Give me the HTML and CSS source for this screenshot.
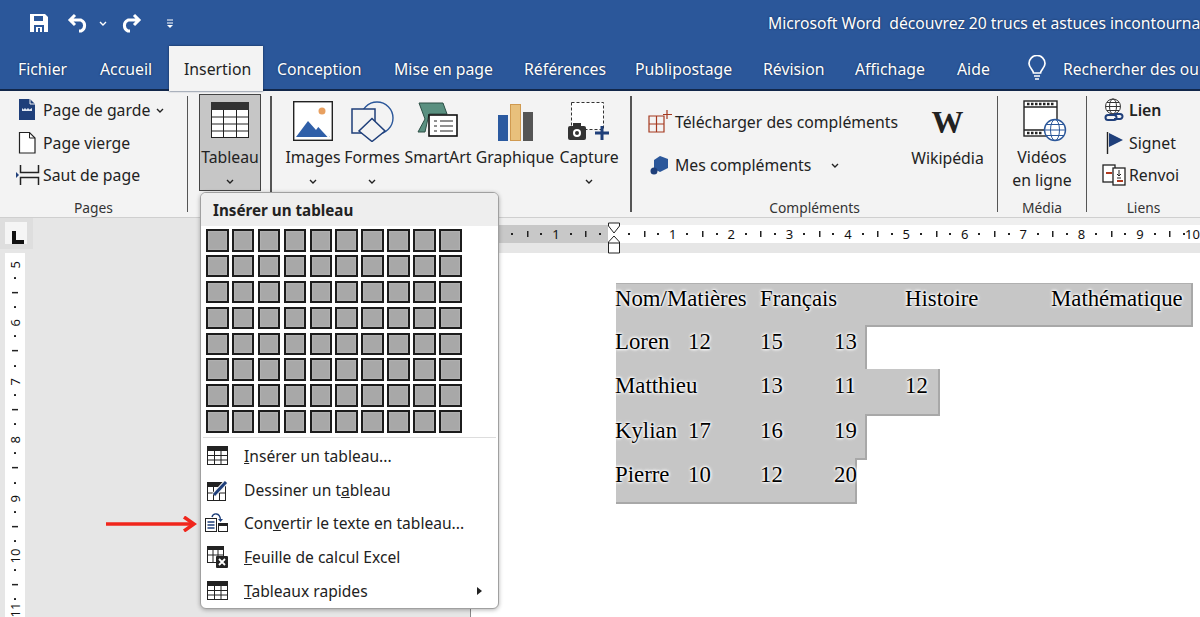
FILE: index.html
```html
<!DOCTYPE html>
<html lang="fr">
<head>
    <meta charset="UTF-8">
    <meta name="viewport" content="width=device-width, initial-scale=1.0">
    <title>Microsoft Word</title>
    <link rel="stylesheet" href="styles.css">
</head>
<body>
    <header class="titlebar">
        <div class="quick-access">
            <svg class="qa-save" width="20" height="20" viewBox="0 0 20 20"><path d="M1 1h15l3 3v15H1z" fill="#fff"/><rect x="5" y="3" width="9" height="5" fill="#2b579a"/><rect x="5" y="12" width="10" height="7" fill="#2b579a"/><rect x="7" y="14" width="6" height="5" fill="#fff"/><rect x="9" y="15" width="2" height="4" fill="#2b579a"/></svg>
            <svg class="qa-undo" width="24" height="20" viewBox="0 0 24 20"><path d="M8 2L3 7l5 5M3 7h11a6 6 0 0 1 0 11h-2" fill="none" stroke="#fff" stroke-width="3"/></svg>
            <svg class="qa-drop" width="8" height="5" viewBox="0 0 8 5"><path d="M1 1l3 3 3-3" fill="none" stroke="#fff" stroke-width="1.4"/></svg>
            <svg class="qa-redo" width="24" height="20" viewBox="0 0 24 20"><path d="M16 2l5 5-5 5M21 7H10a6 6 0 0 0 0 11h2" fill="none" stroke="#fff" stroke-width="3"/></svg>
            <svg class="qa-more" width="8" height="10" viewBox="0 0 8 10"><path d="M1 2h6M1 5h6" stroke="#fff" stroke-width="1.2"/><path d="M1 7h6L4 10z" fill="#fff"/></svg>
        </div>
        <div class="doc-title">Microsoft Word  découvrez 20 trucs et astuces incontourna</div>
    </header>

    <nav class="tabs">
        <span class="tab">Fichier</span>
        <span class="tab">Accueil</span>
        <span class="tab active">Insertion</span>
        <span class="tab">Conception</span>
        <span class="tab">Mise en page</span>
        <span class="tab">Références</span>
        <span class="tab">Publipostage</span>
        <span class="tab">Révision</span>
        <span class="tab">Affichage</span>
        <span class="tab">Aide</span>
        <svg class="bulb" width="20" height="26" viewBox="0 0 20 26"><path d="M6.500 18c0-3-4.500-5-4.500-9.500a8 8 0 0 1 16 0c0 4.500-4.500 6.500-4.500 9.500z" fill="none" stroke="#fff" stroke-width="1.700"/><path d="M7 21h6M8 24h4" stroke="#fff" stroke-width="1.700"/></svg>
        <span class="tab search">Rechercher des ou</span>
    </nav>

    <section class="ribbon">
        <div class="group group-pages">
            <div class="stack">
                <div class="row">
                    <svg class="row-icon" width="26" height="24" viewBox="0 0 26 24"><path d="M3 1h11l5 5v16H3z" fill="#1f3f7a"/><path d="M14 1v5h5" fill="none" stroke="#f3f3f3"/><path d="M6 10l1.500 1.500L9 10l1.500 1.500L12 10l1.500 1.500L16 10v3H6z" fill="#dfe6f2"/></svg>
                    <span>Page de garde</span>
                    <svg class="chev row-chev" width="8" height="5" viewBox="0 0 8 5"><path d="M1 1l3 3 3-3"/></svg>
                </div>
                <div class="row">
                    <svg class="row-icon" width="26" height="24" viewBox="0 0 26 24"><path d="M3.500 1.500h10l5.500 5.500v15H3.500z" fill="#fff" stroke="#222" stroke-width="1.200"/><path d="M13.500 1.500V7H19" fill="none" stroke="#222"/></svg>
                    <span>Page vierge</span>
                </div>
                <div class="row">
                    <svg class="row-icon" width="26" height="24" viewBox="0 0 26 24"><path d="M4.500 2v7.500h18V2M4.500 22v-7.500h18V22" fill="none" stroke="#222" stroke-width="1.500"/><path d="M0 9l3 3-3 3z" fill="#1f3f7a"/></svg>
                    <span>Saut de page</span>
                </div>
            </div>
            <div class="group-label">Pages</div>
        </div>

        <div class="group group-table">
            <div class="tool table-tool">
                <svg width="38" height="36" viewBox="0 0 38 36"><rect x="0.500" y="0.500" width="37" height="35" fill="#fff" stroke="#222"/><rect x="0" y="0" width="38" height="8" fill="#333"/><path d="M0 15h38M0 22h38M0 29h38M12.500 8v28M25.500 8v28" stroke="#222"/></svg>
                <span>Tableau</span>
                <svg class="chev" width="8" height="5" viewBox="0 0 8 5"><path d="M1 1l3 3 3-3"/></svg>
            </div>
        </div>

        <div class="group group-illus">
            <div class="tool">
                <svg width="40" height="40" viewBox="0 0 40 40"><rect x="0.700" y="0.700" width="38.600" height="38.600" fill="#fff" stroke="#222" stroke-width="1.400"/><circle cx="29" cy="10" r="3.500" fill="#e8a060"/><path d="M3 36L15 20l8 9 3-4 11 11z" fill="#2f5fa8"/><path d="M24 23l12 13" stroke="#fff" stroke-width="2"/></svg>
                <span>Images</span>
                <svg class="chev" width="8" height="5" viewBox="0 0 8 5"><path d="M1 1l3 3 3-3"/></svg>
            </div>
            <div class="tool">
                <svg width="46" height="42" viewBox="0 0 46 42"><circle cx="28" cy="18" r="16" fill="none" stroke="#2b579a" stroke-width="1.400"/><rect x="3" y="9" width="23" height="24" fill="#f3f3f3" stroke="#1f3f7a" stroke-width="1.500"/><path d="M23 18.500l13 12.500-13 10.500-13-10.500z" fill="#f3f3f3" stroke="#1f3f7a" stroke-width="1.500"/></svg>
                <span>Formes</span>
                <svg class="chev" width="8" height="5" viewBox="0 0 8 5"><path d="M1 1l3 3 3-3"/></svg>
            </div>
            <div class="tool">
                <svg width="44" height="38" viewBox="0 0 44 38"><path d="M3 1h24l4 11H13L9 30H2l7-13z" fill="#5a9080" stroke="#2c4f45"/><rect x="13" y="13" width="28" height="21" fill="#fff" stroke="#111" stroke-width="1.600"/><path d="M18 19h3M24 19h13M18 24h3M24 24h13M18 29h3M24 29h13" stroke="#222" stroke-width="1.200"/></svg>
                <span>SmartArt</span>
            </div>
            <div class="tool">
                <svg width="38" height="40" viewBox="0 0 38 40"><rect x="2" y="14" width="10" height="26" fill="#2b5aa0"/><rect x="14.500" y="3.500" width="10" height="36" fill="#e8c07c" stroke="#d09a50"/><rect x="27" y="11" width="10" height="29" fill="#555"/></svg>
                <span>Graphique</span>
            </div>
            <div class="tool">
                <svg width="42" height="40" viewBox="0 0 42 40"><rect x="3.500" y="1.500" width="32" height="27" fill="#fff" stroke="#333" stroke-dasharray="3 2"/><rect x="0" y="25" width="18" height="14" rx="2" fill="#333"/><rect x="5" y="22" width="8" height="4" fill="#333"/><circle cx="9" cy="32" r="4" fill="#fff"/><circle cx="9" cy="32" r="2" fill="#333"/><path d="M27 32h14M34 25v14" stroke="#1f3f7a" stroke-width="3"/></svg>
                <span>Capture</span>
                <svg class="chev" width="8" height="5" viewBox="0 0 8 5"><path d="M1 1l3 3 3-3"/></svg>
            </div>
        </div>

        <div class="group group-addins">
            <div class="addins-body">
                <div class="addins-list">
                    <div class="row">
                        <svg class="row-icon" width="24" height="24" viewBox="0 0 24 24"><path d="M1 6h15v16H1zM1 14h15M8.500 6v16" fill="none" stroke="#a5391f" stroke-width="1.200"/><path d="M19 0v9M15 4.500h9" stroke="#a5391f" stroke-width="1.200"/></svg>
                        <span>Télécharger des compléments</span>
                    </div>
                    <div class="row">
                        <svg class="row-icon" width="24" height="24" viewBox="0 0 24 24"><path d="M12 3l8 3v9l-8 4-6-3V7z" fill="#2b579a"/><circle cx="6" cy="18" r="3.500" fill="#1f3f7a"/></svg>
                        <span>Mes compléments</span>
                        <svg class="chev addin-chev" width="8" height="5" viewBox="0 0 8 5"><path d="M1 1l3 3 3-3"/></svg>
                    </div>
                </div>
                <div class="tool wiki-tool">
                    <span class="wiki-logo">W</span>
                    <span>Wikipédia</span>
                </div>
            </div>
            <div class="group-label">Compléments</div>
        </div>

        <div class="group group-media">
            <div class="tool media-tool">
                <svg width="44" height="42" viewBox="0 0 44 42"><rect x="1" y="1" width="33" height="35" fill="#fff" stroke="#222" stroke-width="1.400"/><path d="M1 7h33M1 30h33" stroke="#222" stroke-width="1.400"/><path d="M4 4h27M4 33h16" stroke="#222" stroke-width="2.400" stroke-dasharray="2.500 1.500"/><circle cx="32" cy="30" r="10.500" fill="#fff" stroke="#2b579a" stroke-width="1.400"/><ellipse cx="32" cy="30" rx="4.500" ry="10.500" fill="none" stroke="#2b579a"/><path d="M21.500 30h21M23 24.500h18M23 35.500h18" stroke="#2b579a"/></svg>
                <span>Vidéos<br>en ligne</span>
            </div>
            <div class="group-label">Média</div>
        </div>

        <div class="group group-links">
            <div class="stack">
                <div class="row">
                    <svg class="row-icon" width="24" height="24" viewBox="0 0 24 24"><circle cx="11" cy="8.500" r="7.500" fill="#fff" stroke="#333"/><ellipse cx="11" cy="8.500" rx="3.500" ry="7.500" fill="none" stroke="#333"/><path d="M3.500 8.500h15M5 4.500h12M5 12.500h12" stroke="#333"/><path d="M6 17h6a2.500 2.500 0 0 1 0 5H6a2.500 2.500 0 0 1 0-5zM12 16h6a2.500 2.500 0 0 1 0 5h-6" fill="none" stroke="#1f3f7a" stroke-width="2"/></svg>
                    <span class="link-strong">Lien</span>
                </div>
                <div class="row">
                    <svg class="row-icon" width="24" height="24" viewBox="0 0 24 24"><path d="M5.500 1v22" stroke="#222" stroke-width="1.400"/><path d="M7 2l14 7-14 7z" fill="#1f3f7a"/></svg>
                    <span>Signet</span>
                </div>
                <div class="row">
                    <svg class="row-icon" width="24" height="24" viewBox="0 0 24 24"><rect x="1" y="2" width="12" height="17" fill="#fff" stroke="#222" stroke-width="1.300"/><rect x="11" y="5" width="12" height="17" fill="#fff" stroke="#222" stroke-width="1.300"/><path d="M4 10h6M15 18h6" stroke="#b03a1f" stroke-width="2"/><path d="M17 7v6M15 11l2 2 2-2M15 15h4" fill="none" stroke="#222"/></svg>
                    <span>Renvoi</span>
                </div>
            </div>
            <div class="group-label">Liens</div>
        </div>
    </section>

    <div class="ruler-band">
        <div class="ruler-corner">
            <div class="tab-corner"><span class="tab-stop"></span></div>
        </div>
        <div class="ruler-top">
            <span class="unit"></span><span class="unit">1</span><span class="unit"></span>
            <span class="unit">1</span><span class="unit">2</span><span class="unit">3</span><span class="unit">4</span><span class="unit">5</span><span class="unit">6</span><span class="unit">7</span><span class="unit">8</span><span class="unit">9</span><span class="unit unit-last">10</span>
        </div>
        <svg class="indent" width="14" height="32" viewBox="0 0 14 32"><path d="M1.500 1h11v3L7 11 1.500 4z" fill="#fff" stroke="#222"/><path d="M7 14l5.500 6v11h-11V20z" fill="#fff" stroke="#222"/><path d="M1.500 21h11" stroke="#222"/></svg>
    </div>

    <main class="workspace">
        <div class="ruler-side">
            <div class="ruler-side-inner">
                <span class="vunit">5</span><span class="vunit">6</span><span class="vunit">7</span><span class="vunit">8</span><span class="vunit">9</span><span class="vunit">10</span><span class="vunit vunit-last">11</span>
            </div>
        </div>
        <div class="page">
            <div class="sel-row row-head">
                <span class="span2">Nom/Matières</span><span class="span2">Français</span><span>Histoire</span><span>Mathématique</span>
            </div>
            <div class="sel-row row-short">
                <span>Loren</span><span>12</span><span>15</span><span>13</span>
            </div>
            <div class="sel-row row-long">
                <span>Matthieu</span><span></span><span>13</span><span>11</span><span>12</span>
            </div>
            <div class="sel-row row-short">
                <span>Kylian</span><span>17</span><span>16</span><span>19</span>
            </div>
            <div class="sel-row row-last">
                <span>Pierre</span><span>10</span><span>12</span><span>20</span>
            </div>
        </div>
    </main>

    <div class="table-menu">
        <div class="menu-head">Insérer un tableau</div>
        <div class="cell-grid" id="cells"></div>
        <ul class="menu-list">
            <li>
                <svg width="24" height="22" viewBox="0 0 24 22"><rect x="2.500" y="1.500" width="20" height="18" fill="#fff" stroke="#222"/><rect x="2" y="1" width="21" height="5" fill="#222"/><path d="M2 10.500h21M2 15h21M9.500 6v14M16 6v14" stroke="#222"/></svg>
                <span><u>I</u>nsérer un tableau...</span>
            </li>
            <li>
                <svg width="24" height="22" viewBox="0 0 24 22"><rect x="2.500" y="3.500" width="18" height="18" fill="#fff" stroke="#222"/><rect x="2" y="3" width="19" height="5" fill="#222"/><path d="M2 14h19M8.500 8v14M14.500 8v14" stroke="#222"/><path d="M9 16L21 3" stroke="#f3f3f3" stroke-width="5"/><path d="M9 16L21 3" stroke="#1f3f7a" stroke-width="3"/></svg>
                <span>Dessiner un t<u>a</u>bleau</span>
            </li>
            <li>
                <svg width="24" height="22" viewBox="0 0 24 22"><rect x="0.500" y="6.500" width="11" height="13" fill="#fff" stroke="#222"/><path d="M2.500 10h7M2.500 13h7M2.500 16h7" stroke="#1f3f7a" stroke-width="1.400"/><rect x="13.500" y="11.500" width="9" height="8" fill="#fff" stroke="#222"/><rect x="13" y="11" width="10" height="3" fill="#222"/><path d="M7 5c1-4 8-5 8.500 3" fill="none" stroke="#1f3f7a" stroke-width="1.300"/><path d="M13 7h5l-2.500 3z" fill="#1f3f7a"/></svg>
                <span>Con<u>v</u>ertir le texte en tableau...</span>
            </li>
            <li>
                <svg width="24" height="22" viewBox="0 0 24 22"><rect x="2.500" y="0.500" width="16" height="16" fill="#fff" stroke="#222"/><rect x="2" width="17" height="4" fill="#222"/><path d="M2 9h17M8 4v13M13 4v13" stroke="#222"/><rect x="11" y="10" width="12" height="12" rx="1" fill="#222"/><path d="M14 13l6 6M20 13l-6 6" stroke="#fff" stroke-width="1.800"/></svg>
                <span><u>F</u>euille de calcul Excel</span>
            </li>
            <li>
                <svg width="24" height="22" viewBox="0 0 24 22"><rect x="2.500" y="1.500" width="20" height="18" fill="#fff" stroke="#222"/><rect x="2" y="1" width="21" height="5" fill="#222"/><path d="M2 10.500h21M2 15h21M9.500 6v14M16 6v14" stroke="#222"/></svg>
                <span><u>T</u>ableaux rapides</span>
                <i class="submenu"></i>
            </li>
        </ul>
    </div>

    <svg class="red-arrow" width="92" height="16" viewBox="0 0 92 16"><path d="M1 8h86" stroke="#f0261c" stroke-width="3.500"/><path d="M79 1l10 7-10 7" fill="none" stroke="#f0261c" stroke-width="3.500"/></svg>

    <script>
        // 8 rows of 10 cells for the table picker
        const cells = document.getElementById('cells');
        for (let i = 0; i < 80; i++) {
            cells.appendChild(document.createElement('span'));
        }
    </script>
</body>
</html>
```

FILE: styles.css
```css
* {
    box-sizing: border-box;
}

body {
    margin: 0;
    width: 1200px;
    height: 617px;
    overflow: hidden;
    position: relative;
    background-color: #e6e6e6;
    color: #222;
    font-family: "Noto Sans", "Open Sans", sans-serif;
    font-size: 15.8px;
}

svg {
    display: block;
    flex: none;
}

/* title bar */
.titlebar {
    display: flex;
    align-items: center;
    height: 46px;
    background-color: #2b579a;
    color: #fff;
    overflow: hidden;
}

.quick-access {
    display: flex;
    align-items: center;
    width: 768px;
    flex: none;
    padding-left: 29px;
}

.qa-undo { margin-left: 18px; }
.qa-drop { margin-left: 8px; }
.qa-redo { margin-left: 11px; }
.qa-more { margin-left: 24px; }

.doc-title {
    white-space: pre;
    font-size: 15.700px;
    text-shadow: 0 0 2px #12274a;
}

/* tabs */
.tabs {
    display: grid;
    grid-template-columns: 82px 69px 108px 117px 130px 111px 128px 92px 102px 70px 36px 137px;
    align-items: center;
    height: 45px;
    padding-left: 18px;
    background-color: #2b579a;
    border-bottom: 2px solid #12274a;
    color: #fff;
    white-space: nowrap;
    text-shadow: 0 0 2px #12274a;
}

.tab.active {
    justify-self: start;
    width: 94px;
    height: 45px;
    line-height: 46px;
    padding-left: 15px;
    background-color: #f3f3f3;
    color: #222;
    box-shadow: 0 0 2px #12274a;
    text-shadow: none;
}

.tab.search {
    font-size: 15.600px;
}

.bulb {
    margin-top: -2px;
}

/* ribbon */
.ribbon {
    display: flex;
    height: 127px;
    padding-top: 5px;
    background-color: #f3f3f3;
    border-bottom: 1px solid #cfcfcf;
    white-space: nowrap;
}

.group {
    position: relative;
    height: 116px;
    border-right: 1px solid #555;
    flex: none;
}

.group-label {
    position: absolute;
    left: 0;
    right: 0;
    bottom: -5px;
    text-align: center;
    font-size: 13.800px;
    color: #333;
}

.group-pages { width: 188px; padding-left: 16px; }
.group-table { width: 84px; padding-left: 11px; border-right: 2px solid #555; }
.group-illus {
    width: 360px;
    padding-left: 13px;
    display: grid;
    grid-template-columns: 56px 62px 70px 84px 64px;
    border-right: 2px solid #555;
}
.group-addins { width: 366px; }
.group-media { width: 89px; }
.group-links { width: 113px; padding-left: 15px; border-right: none; }

.stack {
    display: flex;
    flex-direction: column;
    gap: 8.500px;
    padding-top: 2px;
}

.row {
    display: flex;
    align-items: center;
    height: 24px;
}

.group-pages .row-icon {
    margin-right: 1px;
}

.group-links .row-icon {
    margin-right: 3px;
}

.link-strong {
    font-weight: 600;
}

.chev {
    fill: none;
    stroke: #222;
    stroke-width: 1.400;
}

.row-chev { margin-left: 6px; }

.tool {
    display: flex;
    flex-direction: column;
    align-items: center;
    line-height: 23px;
    text-align: center;
}

.tool svg:first-child {
    height: 42px;
    margin-top: 4px;
    margin-bottom: 4px;
}

.tool .chev {
    margin-top: 10px;
}

.table-tool {
    width: 62px;
    height: 97px;
    margin-top: -2px;
    background-color: #c6c6c6;
    border: 1px solid #444;
    padding-top: 7px;
}

.table-tool svg:first-child {
    margin-top: 0;
    height: 36px;
    margin-bottom: 8px;
}

.media-tool svg:first-child {
    margin-left: 6px;
}

.addins-body {
    display: flex;
}

.addins-list {
    display: flex;
    flex-direction: column;
    gap: 19px;
    width: 273px;
    padding: 14px 0 0 16px;
}

.addins-list .row-icon {
    margin-right: 3px;
}

.addin-chev { margin-left: 20px; }

.wiki-tool {
    width: 85px;
    padding-top: 5px;
}

.wiki-logo {
    font-family: "Liberation Serif", serif;
    font-size: 32px;
    font-weight: 700;
    line-height: 42px;
    margin-bottom: 4px;
    color: #222;
}

/* rulers */
.ruler-band {
    position: relative;
    display: flex;
    height: 35px;
    border-top: 7px solid #efefef;
    border-bottom: 10px solid #e6e6e6;
    background-color: #e6e6e6;
}

.ruler-corner {
    flex: none;
    width: 471px;
    height: 35px;
    margin-top: -7px;
    background-color: #e6e6e6;
}

.tab-corner {
    width: 33px;
    height: 31px;
    padding: 4px 0 0 5px;
    background-color: #dedede;
}

.tab-stop {
    display: block;
    position: relative;
    width: 22px;
    height: 22px;
    background-color: #f5f5f5;
}

.tab-stop::after {
    content: "";
    position: absolute;
    left: 7px;
    top: 9px;
    width: 8px;
    height: 9px;
    border-left: 4px solid #111;
    border-bottom: 4px solid #111;
}

.ruler-top {
    display: flex;
    flex: 1;
    height: 18px;
    overflow: hidden;
    background: linear-gradient(90deg, #c8c8c8 137px, #fff 137px);
}

.unit {
    flex: none;
    width: 58.400px;
    line-height: 18px;
    text-align: center;
    font-size: 13px;
    color: #111;
    background-image:
        radial-gradient(circle, #222 1px, transparent 1.200px),
        radial-gradient(circle, #222 1px, transparent 1.200px),
        linear-gradient(#222, #222);
    background-size: 4px 4px, 4px 4px, 1.500px 6px;
    background-position: 12.600px 7px, 41.800px 7px, 0 6px;
    background-repeat: no-repeat;
}

.ruler-top .unit:first-child {
    margin-left: -2.600px;
}

/* the last number ends right at the window edge */
.unit-last {
    width: 30.800px;
    text-align: right;
}

.indent {
    position: absolute;
    left: 607px;
    top: -3px;
}

.workspace {
    display: flex;
    height: 364px;
}

.ruler-side {
    flex: none;
    width: 470px;
    height: 100%;
    overflow: hidden;
    background-color: #e6e6e6;
}

.ruler-side-inner {
    width: 20px;
    margin: -18px 0 0 5px;
    background-color: #fff;
    clip-path: inset(18px 0 0 0);
}

.vunit {
    display: flex;
    align-items: center;
    justify-content: center;
    height: 58.400px;
    writing-mode: vertical-rl;
    transform: rotate(180deg);
    font-size: 13px;
    line-height: 20px;
    color: #111;
    background-image:
        radial-gradient(circle, #222 1px, transparent 1.200px),
        radial-gradient(circle, #222 1px, transparent 1.200px),
        linear-gradient(#222, #222);
    background-size: 4px 4px, 4px 4px, 6px 1.500px;
    background-position: 8px 12.600px, 8px 41.800px, 7px 0;
    background-repeat: no-repeat;
}

.vunit-last {
    padding-top: 8px;
}

/* document page */
.page {
    flex: 1;
    background-color: #fff;
    border-left: 1px solid #8a8a8a;
    padding: 30px 0 0 145px;
    font-family: "Liberation Serif", serif;
    font-size: 22.800px;
    color: #000;
    white-space: nowrap;
}

.sel-row {
    display: grid;
    grid-template-columns: 73px 72px 74px 71px 146px 100px;
    height: 46px;
    padding-top: 2px;
    line-height: 30px;
    background-color: #c6c6c6;
    border-right: 2px solid #a8a8a8;
    border-bottom: 2px solid #a8a8a8;
    text-shadow: 0 0 2px #fff, 0 0 3px #fff, 0 0 3px #fff, 0 0 4px #fff;
}

.sel-row span {
    margin-left: -1px;
}

/* each row sits over the bottom edge of the one above, so the edge only shows where the row above sticks out */
.sel-row + .sel-row {
    margin-top: -2px;
}

.span2 { grid-column: span 2; }

.row-head { width: 577px; height: 44px; padding-top: 0; border-top: 1px solid #b0b0b0; }
.row-short { width: 251px; }
.row-long { width: 324px; height: 47px; }
.row-last { width: 241px; }

/* table dropdown */
.table-menu {
    position: absolute;
    left: 200px;
    top: 192px;
    width: 299px;
    height: 417px;
    background-color: #fff;
    border: 1px solid #a0a0a0;
    border-radius: 6px;
    box-shadow: 0 1px 4px rgba(0, 0, 0, 0.3);
    overflow: hidden;
}

.menu-head {
    height: 33px;
    line-height: 35px;
    padding-left: 12px;
    background-color: #eeeeee;
    font-weight: 700;
    font-size: 15.200px;
    color: #222;
}

.cell-grid {
    display: grid;
    grid-template-columns: repeat(10, 22.500px);
    grid-auto-rows: 22.500px;
    gap: 3.400px;
    margin: 3px 0 0 5px;
}

.cell-grid span {
    background-color: #a8a8a8;
    border: 2px solid #1c1c1c;
    box-shadow: inset 0 0 2px #c4c4c4;
}

.menu-list {
    list-style: none;
    margin: 4px 2px 0;
    padding: 1.500px 0 0;
    border-top: 1px solid #ddd;
    font-size: 15.600px;
}

.menu-list li {
    position: relative;
    display: flex;
    align-items: center;
    height: 33.700px;
    padding-left: 2px;
}

.menu-list span {
    margin-left: 15px;
}

.submenu {
    position: absolute;
    right: 14px;
    top: 13px;
    border-left: 5px solid #222;
    border-top: 4px solid transparent;
    border-bottom: 4px solid transparent;
}

.red-arrow {
    position: absolute;
    left: 105px;
    top: 516px;
}
```
